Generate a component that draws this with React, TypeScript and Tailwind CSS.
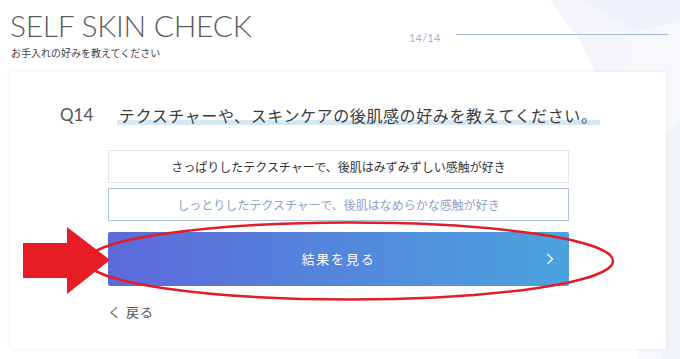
import React from "react";

export default function App() {
  return (
    <div className="relative w-[680px] h-[359px] overflow-hidden bg-white font-['Noto_Sans_CJK_JP',sans-serif]">
      {/* background decoration */}
      <svg className="absolute top-0 right-0" width="260" height="359" viewBox="0 0 260 359">
        <polygon points="130,0 260,0 260,110 205,140 160,40" fill="#f4f6fb" />
        <polygon points="160,0 260,0 260,55 215,30" fill="#eff2f9" />
        <polygon points="205,35 260,20 260,359 218,359" fill="#f6f8fb" />
        <polygon points="232,150 260,120 260,359 242,359" fill="#f1f4f8" />
      </svg>

      <div className="relative flex flex-col">
        {/* header */}
        <div className="flex items-start h-[72px]">
          <div className="pl-[10px] pt-[9px] w-[409px]">
            <div className="font-['Lato',sans-serif] font-light text-[30px] leading-[32px] tracking-[-0.3px] text-[#5c5c5c]">
              SELF SKIN CHECK
            </div>
            <div className="mt-[5px] text-[10px] leading-[14px] text-[#444] pl-[1px]">お手入れの好みを教えてください</div>
          </div>
          <div className="flex items-center mt-[30px]">
            <span className="font-['Lato',sans-serif] text-[11px] text-[#a7b2cc] tracking-[0.2px]">14/14</span>
            <div className="ml-[15px] w-[212px] h-px bg-[#a9bada] -mt-[8px]" />
          </div>
        </div>

        {/* card */}
        <div className="mx-[10px] w-[656px] h-[277px] bg-white shadow-[0_0_4px_rgba(0,0,0,0.08)] flex flex-col">
          <div className="flex items-center pt-[30px] pl-[50px] h-[56px]">
            <span className="font-['Lato',sans-serif] text-[17px] text-[#555] w-[57px] leading-[26px]">Q14</span>
            <span className="text-[16px] leading-[26px] tracking-[0.6px] text-[#3a3a3a] px-[2px] bg-[linear-gradient(transparent_68%,#d5e9f5_68%,#d5e9f5_90%,transparent_90%)]">
              テクスチャーや、スキンケアの後肌感の好みを教えてください。
            </span>
          </div>

          <div className="ml-[98px] w-[461px] mt-[22px] flex flex-col gap-[5px]">
            <div className="h-[33px] border border-[#e6e6e6] flex items-center justify-center text-[12px] text-[#333]">
              さっぱりしたテクスチャーで、後肌はみずみずしい感触が好き
            </div>
            <div className="h-[33px] border border-[#b3c3df] flex items-center justify-center text-[12px] text-[#8ea2c9]">
              しっとりしたテクスチャーで、後肌はなめらかな感触が好き
            </div>
            <div className="mt-[6px] h-[54px] rounded-[2px] bg-[linear-gradient(90deg,#5d69da,#4ba3de)] flex items-center relative">
              <span className="flex-1 text-center text-white text-[13px] tracking-[1.8px]">結果を見る</span>
              <svg className="absolute right-[15px] top-[21px]" width="8" height="12" viewBox="0 0 8 12">
                <polyline points="1.5,1 6.5,6 1.5,11" fill="none" stroke="white" strokeWidth="1.3" />
              </svg>
            </div>
            <div className="mt-[11px] text-[13px] leading-[20px] text-[#555] tracking-[1px]">く 戻る</div>
          </div>
        </div>
      </div>

      {/* red annotation overlay */}
      <svg className="absolute inset-0 pointer-events-none" width="680" height="359" viewBox="0 0 680 359">
        <ellipse cx="350" cy="261" rx="263" ry="38.5" fill="none" stroke="#e11d27" strokeWidth="2.5" />
        <polygon points="23,243 67,243 67,227 110,260 67,294 67,278 23,278" fill="#e81c24" />
      </svg>
    </div>
  );
}
